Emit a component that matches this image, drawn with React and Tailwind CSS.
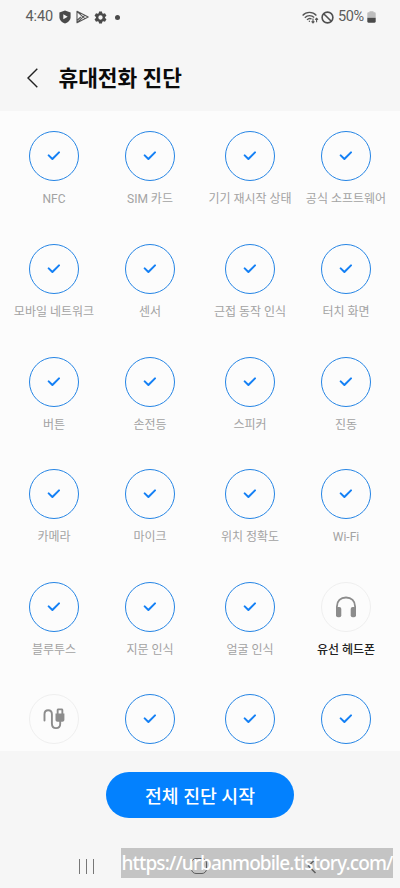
import React from 'react';

const rows = [
  ['NFC', 'SIM 카드', '기기 재시작 상태', '공식 소프트웨어'],
  ['모바일 네트워크', '센서', '근접 동작 인식', '터치 화면'],
  ['버튼', '손전등', '스피커', '진동'],
  ['카메라', '마이크', '위치 정확도', 'Wi-Fi'],
  ['블루투스', '지문 인식', '얼굴 인식', '유선 헤드폰'],
  ['USB', '', '', ''],
];

// tests that have not been run yet
const pending = { '유선 헤드폰': 'headphones', USB: 'usb' };

const CheckIcon = () => (
  <svg width="14" height="10" viewBox="0 0 14 10" fill="none" className="-ml-px">
    <path d="M1.7 4.4 5.4 8 12 1.4" stroke="#1480f5" strokeWidth="2" strokeLinecap="round" strokeLinejoin="round" />
  </svg>
);

const HeadphonesIcon = () => (
  <svg width="22" height="22" viewBox="0 0 22 22" fill="none">
    <path d="M1.9 14V10.5C1.9 5 5.6 1.5 11 1.5s9.1 3.5 9.1 9V14" stroke="#8c8c8c" strokeWidth="1.8" />
    <rect x="1" y="11" width="5.3" height="10.3" rx="2" fill="#8c8c8c" />
    <rect x="15.7" y="11" width="5.3" height="10.3" rx="2" fill="#8c8c8c" />
  </svg>
);

const UsbIcon = () => (
  <svg width="22" height="22" viewBox="0 0 22 22" fill="none">
    <path d="M1.5 12.5V6.2C1.5 3.7 3 2.3 5.2 2.3s3.7 1.4 3.7 3.9v9.3c0 2.9 1.6 4.6 4.1 4.6s4.2-1.6 4.2-4.1v-3" stroke="#8c8c8c" strokeWidth="1.9" strokeLinecap="round" />
    <path d="M12.5 5.6h1.2V2.3c0-1 .7-1.7 1.7-1.7h3.2c1 0 1.7.7 1.7 1.7v3.3h1.1v6.2c0 1.2-.8 2-2 2h-4.9c-1.2 0-2-.8-2-2zM15.6 5.5h2.8V2.3h-2.8z" fill="#8c8c8c" fillRule="evenodd" />
  </svg>
);

const TestItem = ({ label }) => {
  const state = pending[label];
  return (
    <div className="flex w-24 flex-col items-center">
      <div className={`flex size-[50px] items-center justify-center rounded-full border ${state ? 'border-[#efefef]' : 'border-[#2585e5]'}`}>
        {state === 'headphones' && <HeadphonesIcon />}
        {state === 'usb' && <UsbIcon />}
        {!state && <CheckIcon />}
      </div>
      {state !== 'usb' && (
        <span className={`mt-[9px] text-xs leading-[18px] whitespace-nowrap ${state ? 'font-medium text-[#222]' : 'text-[#a3a3a3]'}`}>{label}</span>
      )}
    </div>
  );
};

const StatusBar = () => (
  <div className="flex h-[34px] items-center justify-between pr-[24px] pl-[25.5px] text-[14.5px] text-[#5c5c5c]">
    <div className="flex items-center">
      <span className="w-[33.5px] tracking-[-0.1px]">4:40</span>
      <svg width="12" height="14" viewBox="0 0 12 14">
        <path d="M6 .5 11.6 2.4v4.5c0 3-2.3 5.5-5.6 6.6C2.7 12.4.4 9.9.4 6.9V2.4z" fill="#4a4a4a" />
        <path d="M4.3 4.2v5.1l4.4-2.55z" fill="#f6f6f6" />
      </svg>
      <svg width="13" height="14" viewBox="0 0 13 14" fill="none" className="ml-[5px]" stroke="#555" strokeWidth="1.1" strokeLinejoin="round">
        <path d="M1 1.3v11.4L12.2 7zM1 1.3 8.8 8.6M1 12.7l7.8-7.3M4.8 7 1 10.5" />
      </svg>
      <svg width="13" height="13" viewBox="0 0 24 24" fill="#4a4a4a" className="ml-[5px]">
        <path fillRule="evenodd" d="M9.3 1h5.4l.6 3.3 1.8 1 3.2-1.1L23 8.9l-2.6 2.1v2l2.6 2.1-2.7 4.7-3.2-1.1-1.8 1-.6 3.3H9.3l-.6-3.3-1.8-1-3.2 1.1L1 15.1 3.6 13v-2L1 8.9l2.7-4.7 3.2 1.1 1.8-1zM12 8a4 4 0 1 0 0 8 4 4 0 0 0 0-8z" />
      </svg>
      <span className="ml-[8px] size-[5px] rounded-full bg-[#4a4a4a]" />
    </div>
    <div className="flex items-center">
      <svg width="17" height="13" viewBox="0 0 17 13" fill="none" stroke="#555" strokeWidth="1.3">
        <path d="M.6 4.5C4.4.4 10.6.4 14.4 4.5M2.8 6.7c2.7-2.8 6.7-2.8 9.4-.2M5 8.9c1.3-1.4 3-1.7 4.6-.9" />
        <circle cx="7.4" cy="10.3" r=".7" fill="#555" stroke="none" />
        <path d="M11 7.6v4M9.6 10.4 11 11.9l1.4-1.5M14.6 11.3V7.6M13.2 8.7l1.4-1.4L16 8.7" strokeWidth="1.1" />
      </svg>
      <svg width="13" height="13" viewBox="0 0 13 13" fill="none" stroke="#505050" strokeWidth="1.6" className="ml-[2px]">
        <circle cx="6.5" cy="6.5" r="5.4" />
        <path d="M2.7 2.7 10.3 10.3" />
      </svg>
      <span className="ml-[4px] w-[29px] tracking-[-0.4px]">50%</span>
      <svg width="9" height="12" viewBox="0 0 9 12">
        <path d="M2.5 1.2V.3h4v.9h1c.7 0 1.2.5 1.2 1.2V6.8H.3V2.4c0-.7.5-1.2 1.2-1.2z" fill="#bdbdbd" />
        <path d="M.3 6.8h8.400v3.7c0 .7-.5 1.2-1.2 1.2h-6C.8 11.7.3 11.2.3 10.5z" fill="#4a4a4a" />
      </svg>
    </div>
  </div>
);

function App() {
  return (
    <div className="relative flex h-[888px] w-[400px] flex-col overflow-hidden bg-[#f6f6f6] font-[Roboto,'Noto_Sans_CJK_KR',sans-serif]">
      <StatusBar />
      <header className="flex h-[77px] items-center pt-[11px] pl-[27px]">
        <svg width="11" height="20" viewBox="0 0 11 20" fill="none" className="mb-px shrink-0">
          <path d="M10.3.8 1 10l9.3 9.2" stroke="#222" strokeWidth="1.4" />
        </svg>
        <h1 className="mt-[2px] ml-[20.5px] text-[21.4px] leading-[30px] font-bold text-[#0a0a0a]">휴대전화 진단</h1>
      </header>

      <main className="h-[640px] overflow-hidden bg-[#fcfcfc] pt-[20.4px]">
        {rows.map((row, i) => (
          <div key={i} className="flex h-[112.6px] justify-between px-[6px]">
            <div className="flex">
              <TestItem label={row[0]} />
              <TestItem label={row[1]} />
            </div>
            <div className="flex">
              <TestItem label={row[2]} />
              <TestItem label={row[3]} />
            </div>
          </div>
        ))}
      </main>

      <div className="flex justify-center pt-[21px]">
        <button className="h-[46px] w-[188px] rounded-full bg-[#0381fe] pt-[4px] text-[18.3px] font-medium whitespace-nowrap text-white">전체 진단 시작</button>
      </div>

      <nav className="mt-[39px] flex h-[18px] items-center pl-[79px]">
        <div className="flex h-[15px] w-[15px] justify-between">
          <span className="w-px bg-[#777]" />
          <span className="w-px bg-[#777]" />
          <span className="w-px bg-[#777]" />
        </div>
        <span className="ml-[97px] h-[16px] w-[16px] rounded-[5px] border-[1.5px] border-[#777]" />
        <svg width="10" height="16" viewBox="0 0 10 16" fill="none" className="ml-[100px]">
          <path d="M8.5 1 1.5 8l7 7" stroke="#777" strokeWidth="1.5" />
        </svg>
      </nav>

      <div className="absolute top-[848px] left-[121px] flex h-[30px] w-[272px] items-center justify-center bg-black/20 font-['Noto_Sans',sans-serif] text-[19px] font-medium tracking-[-0.87px] whitespace-nowrap text-white">
        https://urbanmobile.tistory.com/
      </div>
    </div>
  );
}

export default App;
